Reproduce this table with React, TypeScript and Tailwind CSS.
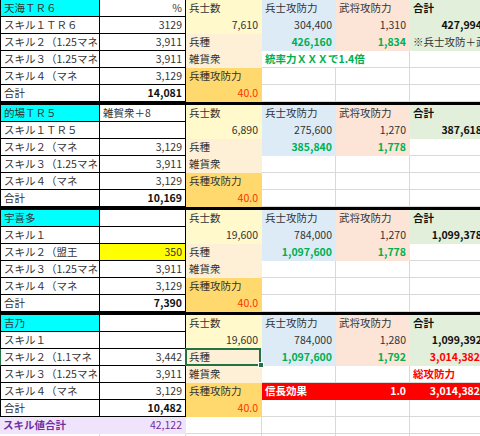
import type { ReactNode } from "react";

const cell = "h-[17px] px-[3px] flex items-center whitespace-nowrap border-r border-b";
const black = `${cell} border-black`;
const white = `${cell} border-[#d9d9d9] bg-white`;
const fill = `${cell} border-transparent`;
const cols = "grid grid-cols-[100px_86px_76px_74px_74px_74px]";

type BlockData = {
  name: string;
  note: string;
  noteRight?: boolean;
  skills: string[];
  vals: string[];
  total: string;
  troops: string;
  soldier: string;
  general: string;
  sum: string;
  soldierUp: string;
  generalUp: string;
  yellowB3?: boolean;
  selectC3?: boolean;
  row3F?: ReactNode;
  row4?: ReactNode;
  row5?: ReactNode;
};

const emptyRow = (
  <>
    <div className={white}></div>
    <div className={white}></div>
    <div className={white}></div>
  </>
);

const blocks: BlockData[] = [
  {
    name: "天海ＴＲ６",
    note: "%",
    noteRight: true,
    skills: ["スキル１ＴＲ６", "スキル２（1.25マネ", "スキル３（1.25マネ", "スキル４（マネ"],
    vals: ["3129", "3,911", "3,911", "3,129"],
    total: "14,081",
    troops: "7,610",
    soldier: "304,400",
    general: "1,310",
    sum: "427,994",
    soldierUp: "426,160",
    generalUp: "1,834",
    row3F: <div className={`${fill} bg-[#e2efda] overflow-hidden`}>※兵士攻防＋武将攻防</div>,
    row4: (
      <>
        <div className={`${white} col-span-2 font-bold text-[#00b050]`}>統率力ＸＸＸで1.4倍</div>
        <div className={white}></div>
      </>
    ),
  },
  {
    name: "的場ＴＲ５",
    note: "雑賀衆＋8",
    skills: ["スキル１ＴＲ５", "スキル２（マネ", "スキル３（1.25マネ", "スキル４（マネ"],
    vals: ["", "3,129", "3,911", "3,129"],
    total: "10,169",
    troops: "6,890",
    soldier: "275,600",
    general: "1,270",
    sum: "387,618",
    soldierUp: "385,840",
    generalUp: "1,778",
  },
  {
    name: "宇喜多",
    note: "",
    skills: ["スキル１", "スキル２（盟王", "スキル３（1.25マネ", "スキル４（マネ"],
    vals: ["", "350", "3,911", "3,129"],
    total: "7,390",
    troops: "19,600",
    soldier: "784,000",
    general: "1,270",
    sum: "1,099,378",
    soldierUp: "1,097,600",
    generalUp: "1,778",
    yellowB3: true,
  },
  {
    name: "吉乃",
    note: "",
    skills: ["スキル１", "スキル２（1.1マネ", "スキル３（1.25マネ", "スキル４（マネ"],
    vals: ["", "3,442", "3,911", "3,129"],
    total: "10,482",
    troops: "19,600",
    soldier: "784,000",
    general: "1,280",
    sum: "1,099,392",
    soldierUp: "1,097,600",
    generalUp: "1,792",
    selectC3: true,
    row3F: <div className={`${fill} bg-[#e2efda] justify-end font-bold text-[#ff0000]`}>3,014,382</div>,
    row4: (
      <>
        <div className={white}></div>
        <div className={white}></div>
        <div className={`${white} font-bold text-[#ff0000]`}>総攻防力</div>
      </>
    ),
    row5: (
      <>
        <div className={`${fill} bg-[#ff0000] font-bold text-white`}>信長効果</div>
        <div className={`${fill} bg-[#ff0000] font-bold text-white justify-end`}>1.0</div>
        <div className={`${fill} bg-[#ff0000] font-bold text-white justify-end`}>3,014,382</div>
      </>
    ),
  },
];

function Block({ b, last }: { b: BlockData; last: boolean }) {
  return (
    <div className={`${cols} ${last ? "" : "border-b-[3px] border-black"}`}>
      {/* row 1 */}
      <div className={`${black} border-l bg-[#00ffff]`}>{b.name}</div>
      <div className={`${black} bg-white ${b.noteRight ? "justify-end" : ""}`}>{b.note}</div>
      <div className={`${fill} bg-[#fff9cc]`}>兵士数</div>
      <div className={`${fill} bg-[#ddebf7]`}>兵士攻防力</div>
      <div className={`${fill} bg-[#fce4d6]`}>武将攻防力</div>
      <div className={`${fill} bg-[#e2efda] font-bold text-[#111]`}>合計</div>

      {/* row 2 */}
      <div className={`${black} border-l bg-white`}>{b.skills[0]}</div>
      <div className={`${black} bg-white justify-end`}>{b.vals[0]}</div>
      <div className={`${fill} bg-[#fff9cc] justify-end`}>{b.troops}</div>
      <div className={`${fill} bg-[#ddebf7] justify-end`}>{b.soldier}</div>
      <div className={`${fill} bg-[#fce4d6] justify-end`}>{b.general}</div>
      <div className={`${fill} bg-[#e2efda] justify-end font-bold text-[#111] pr-[1px]`}>{b.sum}</div>

      {/* row 3 */}
      <div className={`${black} border-l bg-white ${b.selectC3 ? "border-l-[#217346]" : ""}`}>{b.skills[1]}</div>
      <div className={`${black} justify-end ${b.yellowB3 ? "bg-[#ffff00]" : "bg-white"}`}>{b.vals[1]}</div>
      <div className={`${fill} bg-[#fdf0d6] relative`}>
        兵種
        {b.selectC3 && (
          <>
            <div className="absolute -left-px -top-px w-[76px] h-[18px] border-2 border-[#217346]"></div>
            <div className="absolute -right-[3px] -bottom-[3px] w-[6px] h-[6px] bg-[#217346] border border-white"></div>
          </>
        )}
      </div>
      <div className={`${fill} bg-[#ddebf7] justify-end font-bold text-[#00b050]`}>{b.soldierUp}</div>
      <div className={`${fill} bg-[#fce4d6] justify-end font-bold text-[#00b050]`}>{b.generalUp}</div>
      {b.row3F ?? <div className={white}></div>}

      {/* row 4 */}
      <div className={`${black} border-l bg-white`}>{b.skills[2]}</div>
      <div className={`${black} bg-white justify-end`}>{b.vals[2]}</div>
      <div className={`${fill} bg-[#fdf0d6]`}>雑貨衆</div>
      {b.row4 ?? emptyRow}

      {/* row 5 */}
      <div className={`${black} border-l bg-white`}>{b.skills[3]}</div>
      <div className={`${black} bg-white justify-end`}>{b.vals[3]}</div>
      <div className={`${fill} bg-[#ffd86e]`}>兵種攻防力</div>
      {b.row5 ?? emptyRow}

      {/* row 6 */}
      <div className={`${black} border-l bg-white`}>合計</div>
      <div className={`${black} bg-white justify-end font-bold text-[#111]`}>{b.total}</div>
      <div className={`${fill} bg-[#ffd86e] justify-end text-[#ff3300]`}>40.0</div>
      {emptyRow}
    </div>
  );
}

export default function App() {
  return (
    <div className="w-[480px] h-[436px] overflow-hidden bg-white font-['Noto_Sans_CJK_JP',sans-serif] text-[10.5px] leading-none text-[#333]">
      <div className="w-[484px]">
        {blocks.map((b, i) => (
          <Block key={i} b={b} last={i === blocks.length - 1} />
        ))}
        <div className={cols}>
          <div className={`${fill} bg-[#efe4fb] font-bold text-[#7030a0]`}>スキル値合計</div>
          <div className={`${fill} bg-[#efe4fb] justify-end text-[#7030a0]`}>42,122</div>
          <div className={white}></div>
          <div className={white}></div>
          <div className={white}></div>
          <div className={white}></div>
        </div>
        <div className={cols}>
          <div className={white}></div>
          <div className={white}></div>
          <div className={white}></div>
          <div className={white}></div>
          <div className={white}></div>
          <div className={white}></div>
        </div>
      </div>
    </div>
  );
}
